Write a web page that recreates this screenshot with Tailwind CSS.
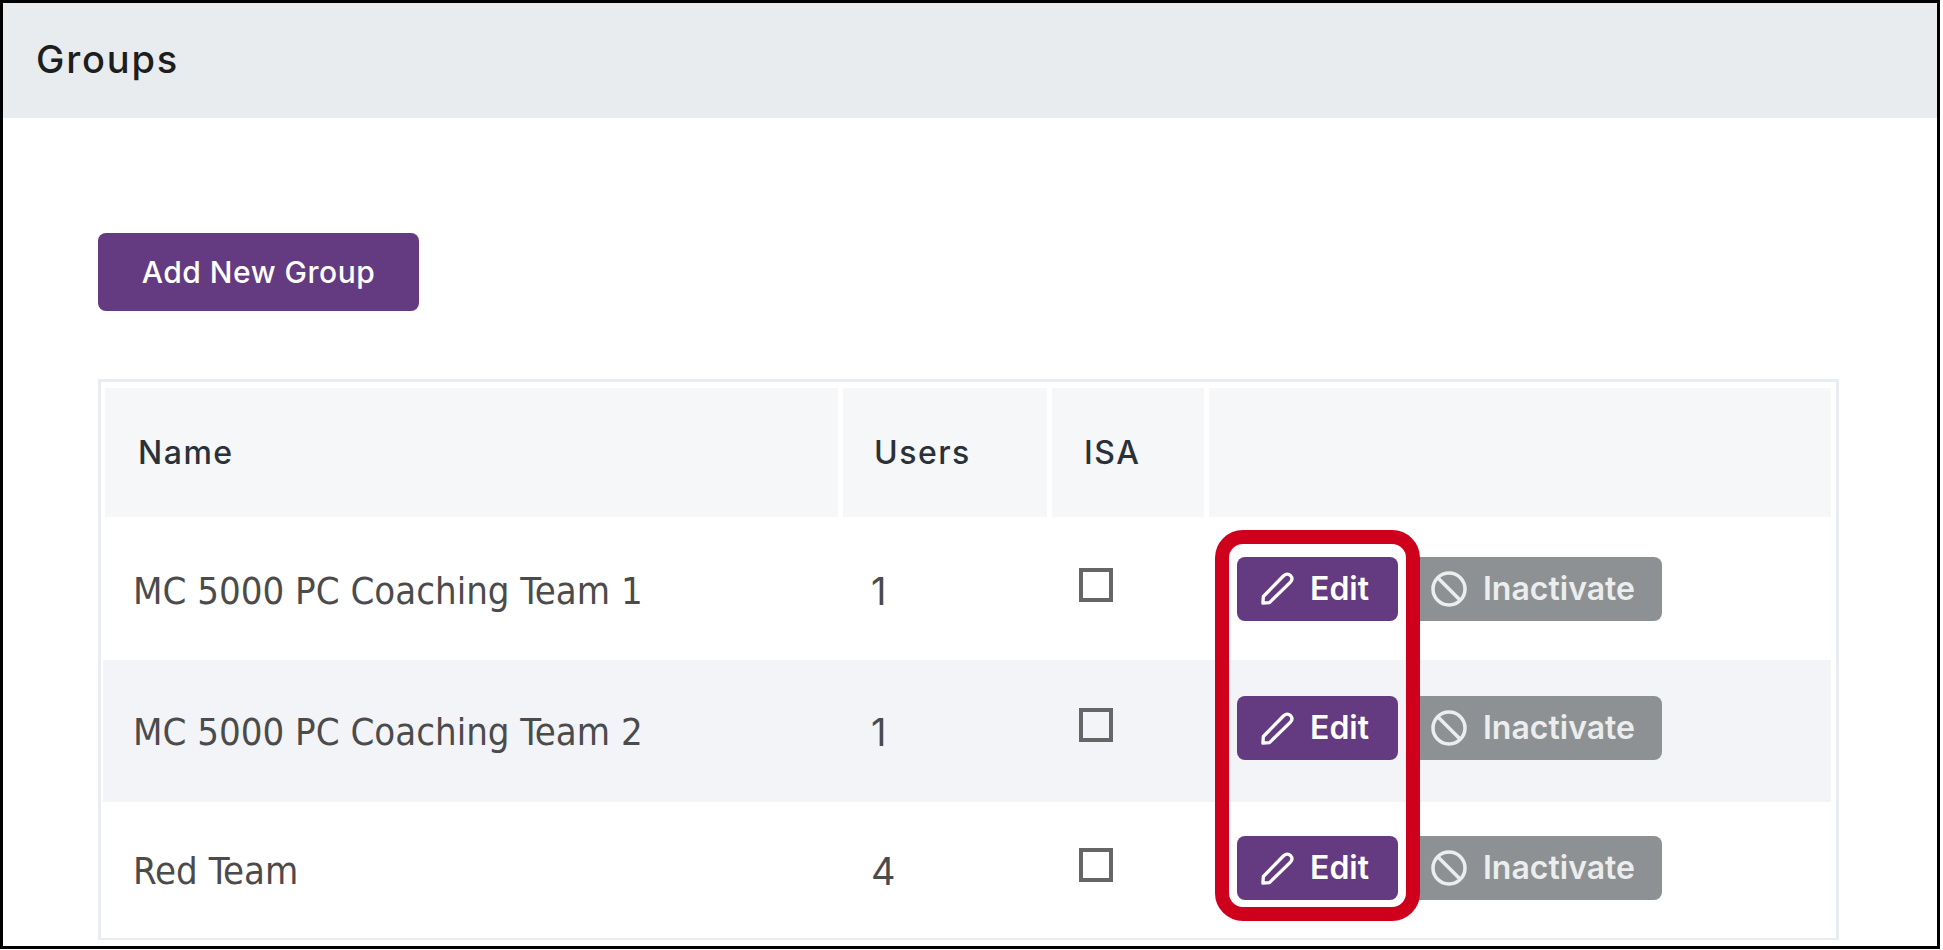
<!doctype html>
<html lang="en">
<head>
<meta charset="utf-8">
<title>Groups</title>
<script src="https://cdn.jsdelivr.net/npm/@tailwindcss/browser@4"></script>
</head>
<body class="bg-white font-['Inter',sans-serif]">
<div class="relative w-[1943px] h-[950px] overflow-hidden">
  <div class="w-[1940px] h-[949px] border-[3px] border-black flex flex-col">
    <!-- panel heading -->
    <div class="h-[115px] shrink-0 bg-[#e9ecef] flex items-center pl-[33px]">
      <h1 class="text-[38px] font-medium tracking-[1.8px] text-[#1c1e20] -mt-[3px]">Groups</h1>
    </div>

    <div class="pl-[95px] pt-[115px]">
      <button class="w-[321px] h-[78px] rounded-lg bg-[#643a80] text-white text-[30px] font-medium tracking-[0.5px]">Add New Group</button>

      <div class="mt-[68px] w-[1741px] h-[561px] border-[3px] border-b-2 border-[#e9edf1] pt-[6px]">
        <!-- header -->
        <div class="grid grid-cols-[733px_204px_152px_622px] gap-x-[5px] pl-[4px] h-[129px] text-[32px] font-medium tracking-[1.5px] text-[#2b3138]">
          <div class="bg-[#f6f7f9] flex items-center pl-[33px]">Name</div>
          <div class="bg-[#f6f7f9] flex items-center pl-[31px]">Users</div>
          <div class="bg-[#f6f7f9] flex items-center pl-[32px]">ISA</div>
          <div class="bg-[#f6f7f9]"></div>
        </div>

        <!-- row 1 -->
        <div class="h-[143px] grid grid-cols-[737px_209px_157px_1fr] pl-[4px] mr-[5px] items-center">
          <div class="pl-[28px] mt-[5px] text-[#4b4b4b] text-[38px] font-['DejaVu_Sans'] [font-stretch:condensed]">MC 5000 PC Coaching Team 1</div>
          <div class="pl-[29px] mt-[5px] text-[#4b4b4b] text-[38px]">1</div>
          <div class="pl-[28px]"><div class="w-[34px] h-[34px] border-[4px] border-[#666] -mt-[8px]"></div></div>
          <div class="flex gap-[8px] pl-[29px]">
            <button class="w-[161px] h-[64px] rounded-lg bg-[#643a80] text-white flex items-center pl-[24px] gap-[16px] text-[32px] font-semibold">
              <svg class="w-[33px] h-[35px]" viewBox="0 0 35 35" fill="none" stroke="currentColor" stroke-width="3.5" stroke-linejoin="round"><path d="M2 33 L2.5 26 L24 4 Q28 0.5 31.5 4 Q34.5 7.5 31 11 L9 32.5 Z"/></svg>
              Edit
            </button>
            <button class="w-[256px] h-[64px] rounded-lg bg-[#8e9193] text-[#eceded] flex items-center pl-[25px] gap-[16px] text-[32px] font-semibold">
              <svg class="w-[36px] h-[36px]" viewBox="0 0 36 36" fill="none" stroke="currentColor" stroke-width="3.5"><circle cx="18" cy="18" r="16"/><path d="M7 7 L29 29"/></svg>
              Inactivate
            </button>
          </div>
        </div>

        <!-- row 2 -->
        <div class="h-[142px] grid grid-cols-[737px_209px_157px_1fr] ml-[2px] pl-[2px] mr-[5px] items-center bg-[#f3f4f8]">
          <div class="pl-[28px] mt-[3px] text-[#4b4b4b] text-[38px] font-['DejaVu_Sans'] [font-stretch:condensed]">MC 5000 PC Coaching Team 2</div>
          <div class="pl-[29px] mt-[3px] text-[#4b4b4b] text-[38px]">1</div>
          <div class="pl-[28px]"><div class="w-[34px] h-[34px] border-[4px] border-[#666] -mt-[12px]"></div></div>
          <div class="flex gap-[8px] pl-[29px] -mt-[6px]">
            <button class="w-[161px] h-[64px] rounded-lg bg-[#643a80] text-white flex items-center pl-[24px] gap-[16px] text-[32px] font-semibold">
              <svg class="w-[33px] h-[35px]" viewBox="0 0 35 35" fill="none" stroke="currentColor" stroke-width="3.5" stroke-linejoin="round"><path d="M2 33 L2.5 26 L24 4 Q28 0.5 31.5 4 Q34.5 7.5 31 11 L9 32.5 Z"/></svg>
              Edit
            </button>
            <button class="w-[256px] h-[64px] rounded-lg bg-[#8e9193] text-[#eceded] flex items-center pl-[25px] gap-[16px] text-[32px] font-semibold">
              <svg class="w-[36px] h-[36px]" viewBox="0 0 36 36" fill="none" stroke="currentColor" stroke-width="3.5"><circle cx="18" cy="18" r="16"/><path d="M7 7 L29 29"/></svg>
              Inactivate
            </button>
          </div>
        </div>

        <!-- row 3 -->
        <div class="h-[137px] grid grid-cols-[737px_209px_157px_1fr] pl-[4px] mr-[5px] items-center">
          <div class="pl-[28px] mt-[2px] text-[#4b4b4b] text-[38px] font-['DejaVu_Sans'] [font-stretch:condensed]">Red Team</div>
          <div class="pl-[29px] mt-[2px] text-[#4b4b4b] text-[38px]">4</div>
          <div class="pl-[28px]"><div class="w-[34px] h-[34px] border-[4px] border-[#666] -mt-[12px]"></div></div>
          <div class="flex gap-[8px] pl-[29px] -mt-[5px]">
            <button class="w-[161px] h-[64px] rounded-lg bg-[#643a80] text-white flex items-center pl-[24px] gap-[16px] text-[32px] font-semibold">
              <svg class="w-[33px] h-[35px]" viewBox="0 0 35 35" fill="none" stroke="currentColor" stroke-width="3.5" stroke-linejoin="round"><path d="M2 33 L2.5 26 L24 4 Q28 0.5 31.5 4 Q34.5 7.5 31 11 L9 32.5 Z"/></svg>
              Edit
            </button>
            <button class="w-[256px] h-[64px] rounded-lg bg-[#8e9193] text-[#eceded] flex items-center pl-[25px] gap-[16px] text-[32px] font-semibold">
              <svg class="w-[36px] h-[36px]" viewBox="0 0 36 36" fill="none" stroke="currentColor" stroke-width="3.5"><circle cx="18" cy="18" r="16"/><path d="M7 7 L29 29"/></svg>
              Inactivate
            </button>
          </div>
        </div>
      </div>
    </div>
  </div>

  <!-- red callout over the edit buttons -->
  <div class="absolute left-[1215px] top-[530px] w-[205px] h-[391px] border-[14px] border-[#cf001c] rounded-[28px]"></div>
</div>
</body>
</html>
